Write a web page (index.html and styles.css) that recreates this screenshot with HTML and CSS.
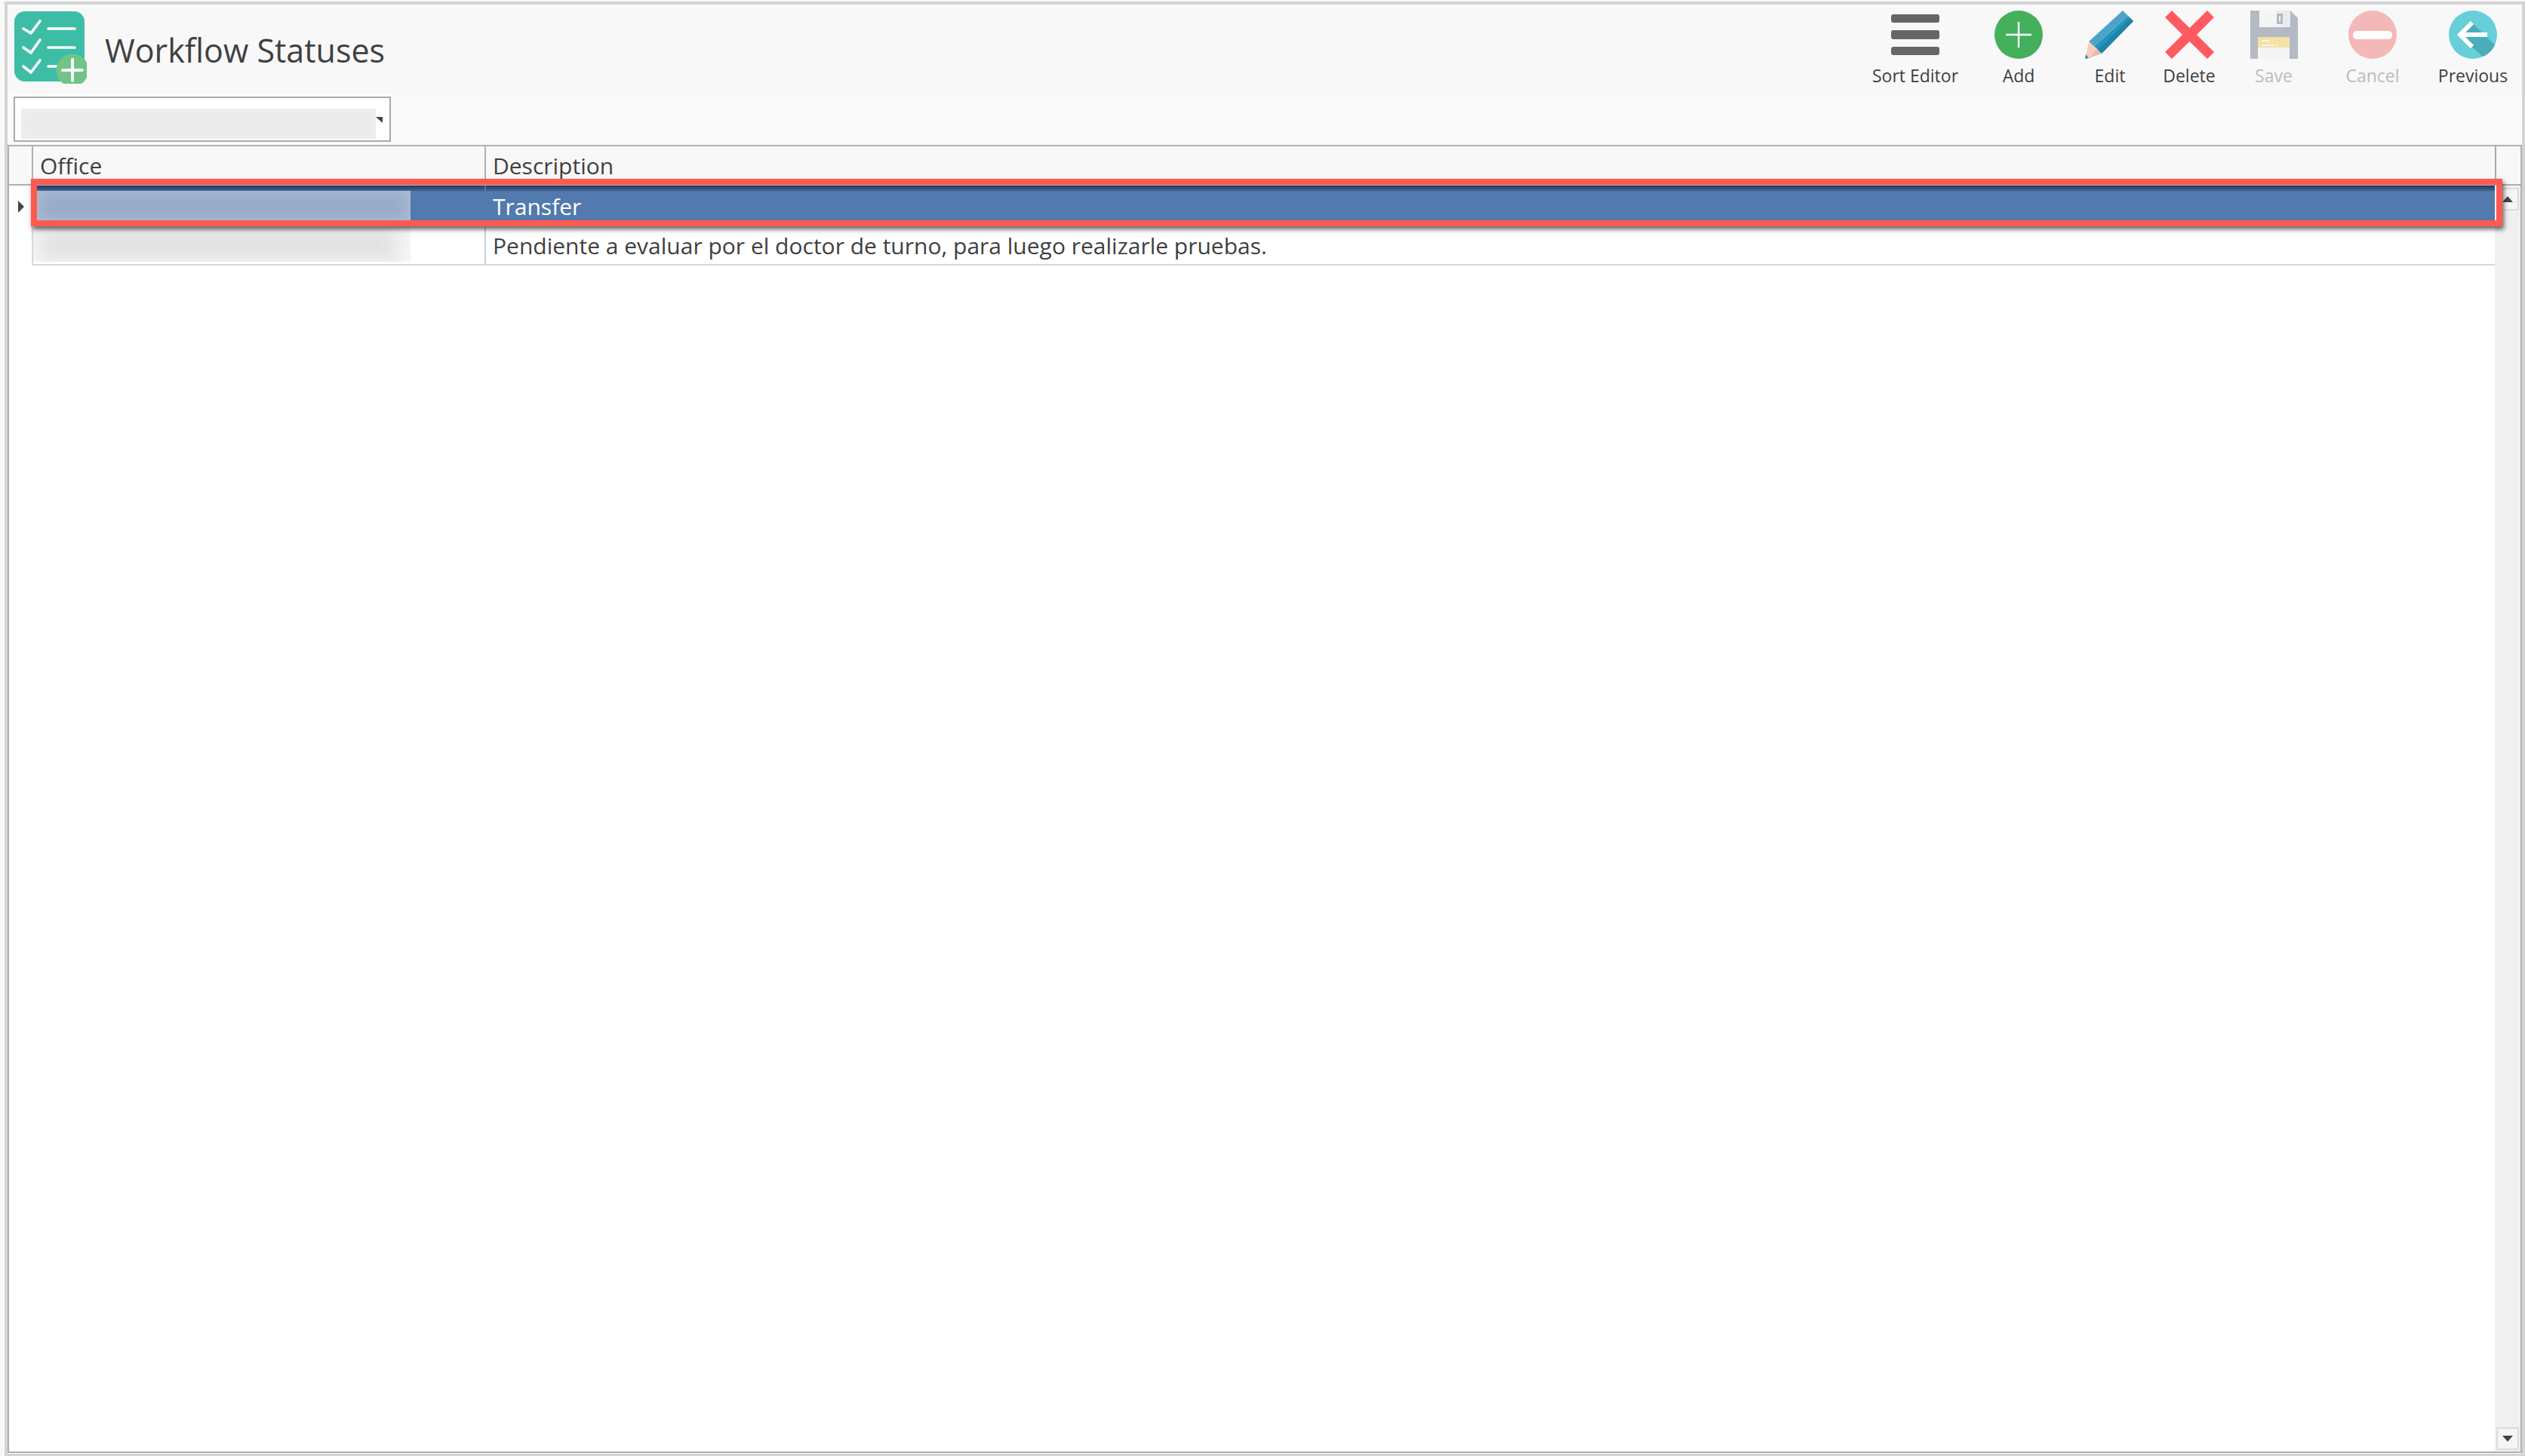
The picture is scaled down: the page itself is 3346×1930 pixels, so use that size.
FILE: index.html
```html
<!DOCTYPE html>
<html lang="en">
<head>
<meta charset="utf-8">
<title>Workflow Statuses</title>
<link rel="stylesheet" href="styles.css">
</head>
<body>
<div class="window">
  <header class="topbar">
    <div class="brand">
      <svg class="logo" width="96" height="96" viewBox="0 0 96 96">
        <rect x="0" y="0" width="93" height="93" rx="14" fill="#3dbda6"/>
        <g fill="none" stroke="#f6fbfa" stroke-width="3.700" stroke-linecap="round" stroke-linejoin="round">
          <path d="M12 23l10 6L34 13M12 48l10 7L34 38M12 73l10 8L34 65"/>
          <path d="M45 23h35M45 48h35M45 73h11"/>
        </g>
        <circle cx="77" cy="78" r="21.500" fill="#71c488"/>
        <path d="M77 64v28M64 78h26" stroke="#f6fbf7" stroke-width="4" stroke-linecap="round"/>
      </svg>
      <h1 class="title">Workflow Statuses</h1>
    </div>
    <nav class="toolbar">
      <div class="tool">
        <svg class="icon" width="66" height="64" viewBox="0 0 66 64">
          <rect x="1" y="5" width="64" height="11" rx="3" fill="#666"/>
          <rect x="1" y="26" width="64" height="12" rx="3" fill="#666"/>
          <rect x="1" y="48" width="64" height="11" rx="3" fill="#666"/>
        </svg>
        <span class="tool-label">Sort Editor</span>
      </div>
      <div class="tool">
        <svg class="icon" width="64" height="64" viewBox="0 0 64 64">
          <circle cx="32" cy="32" r="32" fill="#43b05c"/>
          <path d="M32 15v34M15 32h34" stroke="#fff" stroke-width="2.400"/>
        </svg>
        <span class="tool-label">Add</span>
      </div>
      <div class="tool">
        <svg class="icon" width="66" height="64" viewBox="0 0 66 64">
          <path d="M5 41 50 0l7 7L12 48z" fill="#4da3c7"/>
          <path d="M12 48 57 7l7 7-42 43-8-8z" fill="#2394bc"/>
          <path d="M16 53 60 10l4 4-42 43z" fill="#1f84a8"/>
          <path d="M5 41 0 64l22-7z" fill="#fbcdb9"/>
          <path d="M9 60l5-9 8 6-20 7z" fill="#eab9a8"/>
          <path d="M1 58 0 64l5-1z" fill="#2394bc"/>
        </svg>
        <span class="tool-label">Edit</span>
      </div>
      <div class="tool">
        <svg class="icon" width="65" height="64" viewBox="0 0 65 64">
          <path d="M9 0 32.500 23 56 0l9 9-23 23 23 23-9 9-23.500-23L9 64l-9-9 23-23L0 9z" fill="#ff5a5f"/>
        </svg>
        <span class="tool-label">Delete</span>
      </div>
      <div class="tool tool-off">
        <svg class="icon" width="63" height="64" viewBox="0 0 63 64">
          <path d="M0 0h53l10 10v54H0z" fill="#b4bac4"/>
          <rect x="12" y="0" width="41" height="22" fill="#e9ebec"/>
          <path d="M12 0h22l9 22H12z" fill="#f3f4f4"/>
          <rect x="35" y="4" width="8" height="14" fill="#b4bac4"/>
          <rect x="38" y="7" width="2" height="8" fill="#e9ebec"/>
          <rect x="10" y="35" width="42" height="29" fill="#f3f5f5"/>
          <rect x="10" y="35" width="42" height="14" fill="#f5e1a6"/>
          <path d="M15 40h10M15 46h16" stroke="#fbf6e6" stroke-width="2"/>
          <rect x="34" y="45" width="2" height="2" fill="#fbf6e6"/>
        </svg>
        <span class="tool-label">Save</span>
      </div>
      <div class="tool tool-off">
        <svg class="icon" width="64" height="64" viewBox="0 0 64 64">
          <circle cx="32" cy="32" r="32" fill="#f4b8b9"/>
          <rect x="6" y="27" width="52" height="11" rx="5" fill="#fff"/>
        </svg>
        <span class="tool-label">Cancel</span>
      </div>
      <div class="tool">
        <svg class="icon" width="64" height="64" viewBox="0 0 64 64">
          <circle cx="32" cy="32" r="32" fill="#67cfd9"/>
          <path d="M31 16 61 46A32 32 0 0 1 45 61L13 32z" fill="#4aadb9"/>
          <path d="M31 16 15 32l16 16" fill="none" stroke="#fff" stroke-width="6"/>
          <path d="M15 32h36" stroke="#fff" stroke-width="6"/>
        </svg>
        <span class="tool-label">Previous</span>
      </div>
    </nav>
  </header>

  <div class="filterbar">
    <div class="combo">
      <div class="redacted redacted-combo"><div class="smudge"></div></div>
      <span class="combo-arrow"></span>
    </div>
  </div>

  <section class="grid">
    <div class="grid-head">
      <div class="corner"></div>
      <div class="col col-office">Office</div>
      <div class="col col-desc">Description</div>
      <div class="head-spare"></div>
    </div>
    <div class="grid-body">
      <div class="rows">
        <div class="row row-selected">
          <div class="selector"><span class="row-arrow"></span></div>
          <div class="cell cell-office">
            <div class="redacted redacted-selected"><div class="smudge"></div></div>
          </div>
          <div class="cell cell-desc">Transfer</div>
        </div>
        <div class="row row-plain">
          <div class="selector"></div>
          <div class="cell cell-office">
            <div class="redacted redacted-plain"><div class="smudge"></div></div>
          </div>
          <div class="cell cell-desc">Pendiente a evaluar por el doctor de turno, para luego realizarle pruebas.</div>
        </div>
      </div>
      <div class="scrollbar">
        <div class="scroll-btn scroll-up"><span class="arrow-up"></span></div>
        <div class="scroll-btn scroll-down"><span class="arrow-down"></span></div>
      </div>
    </div>
    <div class="highlight"></div>
  </section>
</div>
</body>
</html>
```
FILE: styles.css
```css
* { box-sizing: border-box; }
html, body { margin: 0; height: 100%; }
body {
  background: #f8f8f8;
  padding: 2px 0 0 6px;
  font-family: "Open Sans", "Noto Sans", "Liberation Sans", sans-serif;
  color: #404040;
  overflow: hidden;
}
.window {
  height: 1928px;
  border: 4px solid #d4d4d4;
  border-bottom-width: 3px;
  display: flex;
  flex-direction: column;
  background: #fafafa;
}
.topbar {
  height: 118px;
  flex: none;
  background: #f8f8f8;
  display: flex;
  justify-content: space-between;
}
.brand { display: flex; align-items: flex-start; padding: 9px 0 0 9px; }
.logo { flex: none; display: block; }
.title {
  margin: 24px 0 0 24px;
  font-size: 43px;
  font-weight: 500;
  line-height: 56px;
  color: #404040;
}
.toolbar {
  display: grid;
  grid-template-columns: 144px 130px 112px 98px 126px 136px 130px;
  padding-top: 8px;
}
.tool { display: flex; flex-direction: column; align-items: center; }
.icon { display: block; flex: none; }
.tool-label { font-size: 23px; line-height: 30px; margin-top: 7px; color: #404040; }
.tool-off .tool-label { color: #bcbcbc; }
.filterbar { height: 68px; flex: none; padding: 4px 0 0 8px; }
.combo {
  width: 500px;
  height: 60px;
  border: 2px solid #aaa;
  background: #fff;
  display: flex;
  padding: 14px 0 0 8px;
}
.redacted { overflow: hidden; flex: none; }
.smudge { width: 100%; height: 100%; filter: blur(12px); }
.redacted-combo { width: 470px; height: 40px; background: #f1f1f1; }
.redacted-combo .smudge { background: #e9e9e9; }
.combo-arrow {
  width: 0;
  height: 0;
  margin-top: 11px;
  border-top: 8px solid #444;
  border-left: 9px solid transparent;
}
.grid {
  flex: 1;
  min-height: 0;
  position: relative;
  border: 2px solid #b0b0b0;
  background: #fff;
  display: flex;
  flex-direction: column;
  margin-bottom: 1px;
}
.grid-head {
  height: 52px;
  flex: none;
  display: flex;
  background: #f8f8f8;
  border-bottom: 2px solid #b0b0b0;
}
.corner { width: 32px; flex: none; border-right: 2px solid #b0b0b0; }
.col { font-size: 30px; line-height: 40px; padding: 6px 0 0 9px; }
.col-office { width: 600px; flex: none; border-right: 2px solid #b0b0b0; }
.col-desc { width: 2664px; flex: none; padding-left: 9px; border-right: 2px solid #a8a8a8; }
.head-spare { flex: 1; }
.grid-body { flex: 1; min-height: 0; display: flex; }
.rows { flex: 1; min-width: 0; background: #fff; }
.row { display: flex; }
.selector {
  width: 32px;
  flex: none;
  display: flex;
  align-items: center;
  padding-left: 12px;
  background: #fff;
}
.row-arrow {
  width: 0;
  height: 0;
  border-left: 8px solid #444;
  border-top: 8px solid transparent;
  border-bottom: 8px solid transparent;
}
.cell { font-size: 30px; line-height: 40px; }
.cell-office { width: 600px; flex: none; border-right: 2px solid #c2cfe0; }
.cell-desc { flex: 1; padding-left: 9px; }
.row-selected { height: 55px; }
.row-selected .cell { background: linear-gradient(#1f3a5c, #3d5f8c 6px, #527aae 8px); color: #fff; height: 47px; }
.row-selected .cell-office { border-right-color: #527aae; padding: 7px 0 0 5px; }
.row-selected .cell-desc { padding-top: 8px; }
.redacted-selected { width: 495px; height: 40px; background: #b6c3d9; }
.redacted-selected .smudge { background: #95a8c7; }
.row-plain { height: 51px; }
.row-plain .cell { border-bottom: 2px solid #d8d8d8; }
.row-plain .cell-office { border-left: 2px solid #d8d8d8; margin-left: -2px; width: 602px; padding: 0 0 3px 0; }
.row-plain .cell-desc { padding-top: 5px; }
.redacted-plain { width: 500px; height: 46px; background: #f7f7f7; }
.redacted-plain .smudge { background: #e2e2e4; margin-left: 8px; width: 476px; }
.scrollbar {
  width: 34px;
  flex: none;
  background: #f0f0f0;
  display: flex;
  flex-direction: column;
  justify-content: space-between;
  padding: 3px 2px 2px 2px;
}
.scroll-btn {
  height: 30px;
  border: 2px solid #dcdcdc;
  background: #f5f5f5;
  display: flex;
  align-items: center;
  justify-content: center;
}
.arrow-up, .arrow-down { width: 0; height: 0; border-left: 7px solid transparent; border-right: 7px solid transparent; }
.arrow-up { border-bottom: 8px solid #444; }
.arrow-down { border-top: 8px solid #444; }
.highlight {
  position: absolute;
  left: 29px;
  top: 43px;
  width: 3275px;
  height: 63px;
  border: 8px solid #ff5a4f;
  box-shadow: 2px 4px 6px rgba(0, 0, 0, 0.6);
  pointer-events: none;
}
```
